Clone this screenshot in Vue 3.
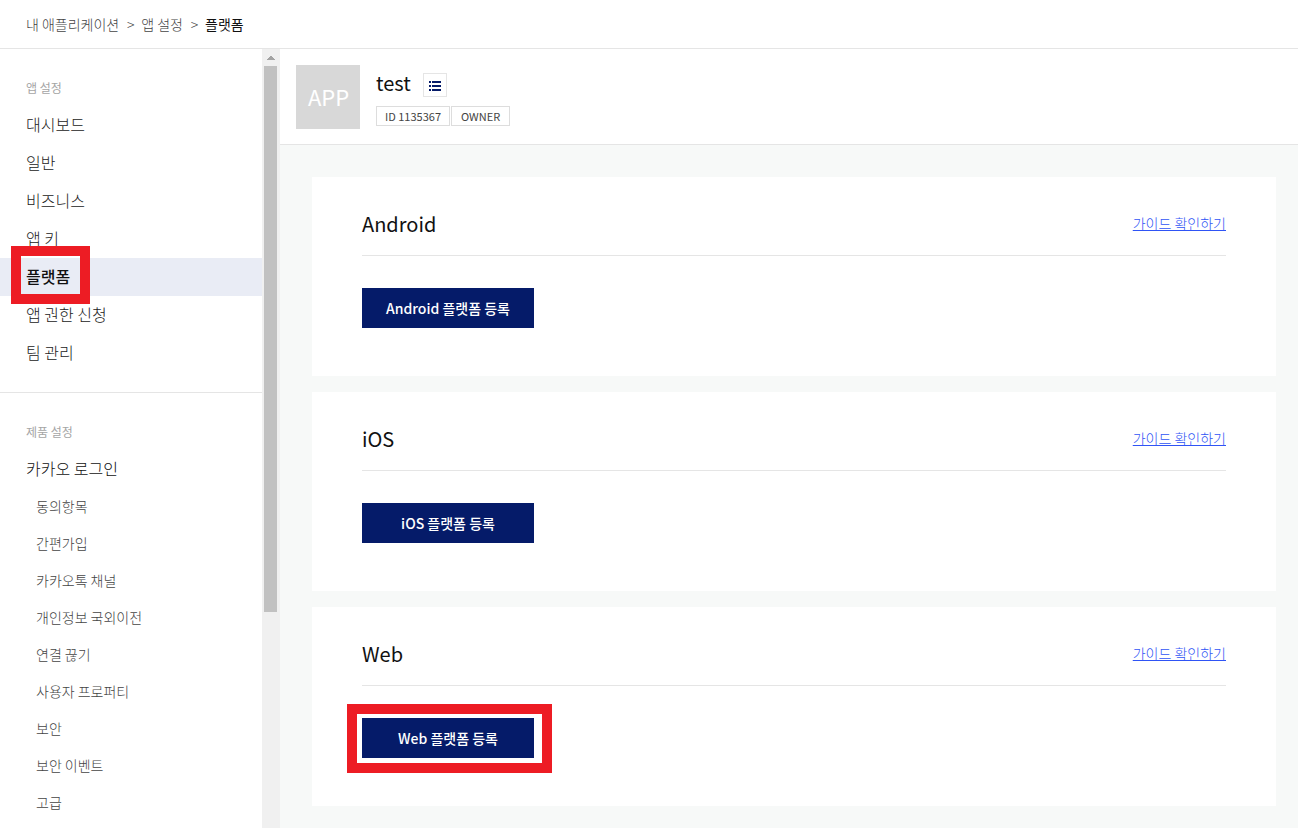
<script setup>
const appMenu = ['대시보드', '일반', '비즈니스', '앱 키', '플랫폼', '앱 권한 신청', '팀 관리']
const loginMenu = ['동의항목', '간편가입', '카카오톡 채널', '개인정보 국외이전', '연결 끊기', '사용자 프로퍼티', '보안', '보안 이벤트', '고급']
const platforms = ['Android', 'iOS', 'Web']
const current = '플랫폼'
const marked = 'Web'
</script>

<template>
  <div class="page">
    <nav class="breadcrumb" aria-label="breadcrumb">
      <a href="#">내 애플리케이션</a>
      <span class="sep">&gt;</span>
      <a href="#">앱 설정</a>
      <span class="sep">&gt;</span>
      <a href="#" class="here" aria-current="page">플랫폼</a>
    </nav>

    <div class="body">
      <aside class="sidebar">
        <nav class="menu">
          <section class="group">
            <h2>앱 설정</h2>
            <ul>
              <li v-for="item in appMenu" :key="item" :class="{ active: item === current }">
                <a href="#">{{ item }}</a>
                <span v-if="item === current" class="mark"></span>
              </li>
            </ul>
          </section>
          <section class="group">
            <h2>제품 설정</h2>
            <ul>
              <li class="parent"><a href="#">카카오 로그인</a></li>
              <li v-for="item in loginMenu" :key="item" class="sub"><a href="#">{{ item }}</a></li>
            </ul>
          </section>
        </nav>
        <div class="scrollbar" aria-hidden="true">
          <svg class="arrow" width="8" height="4" viewBox="0 0 8 4" shape-rendering="crispEdges">
            <path d="M3 0h2v1h1v1h1v1h1v1H0V3h1V2h1V1h1z" fill="#a3a3a3" />
          </svg>
          <div class="thumb"></div>
        </div>
      </aside>

      <main class="main">
        <header class="app-head">
          <div class="app-icon">APP</div>
          <div class="app-info">
            <div class="name-row">
              <h1>test</h1>
              <button type="button" class="list-btn" aria-label="앱 목록">
                <svg width="12" height="10" viewBox="0 0 12 10" shape-rendering="crispEdges" fill="#051b69">
                  <path d="M0 0h2v2H0zM3 0h9v2H3zM0 4h2v2H0zM3 4h9v2H3zM0 8h2v2H0zM3 8h9v2H3z" />
                </svg>
              </button>
            </div>
            <div class="tags">
              <span class="tag">ID 1135367</span>
              <span class="tag owner">OWNER</span>
            </div>
          </div>
        </header>

        <div class="cards">
          <section v-for="name in platforms" :key="name" class="card">
            <div class="card-head">
              <h2>{{ name }}</h2>
              <a href="#">가이드 확인하기</a>
            </div>
            <div class="action">
              <button type="button" class="register">{{ name }} 플랫폼 등록</button>
              <span v-if="name === marked" class="mark"></span>
            </div>
          </section>
        </div>
      </main>
    </div>
  </div>
</template>

<style>
body {
  margin: 0;
  overflow: hidden;
}
</style>

<style scoped>
.page,
.page * {
  box-sizing: border-box;
}
.page {
  display: flex;
  flex-direction: column;
  height: 100vh;
  background: #fff;
  color: #111;
  font-family: "Noto Sans CJK KR", "Noto Sans", sans-serif;
}
h1,
h2,
ul {
  margin: 0;
  padding: 0;
  font-weight: 400;
  list-style: none;
}
a {
  color: inherit;
  text-decoration: none;
}
button {
  font-family: inherit;
  cursor: pointer;
}
.breadcrumb {
  display: flex;
  flex: none;
  align-items: center;
  height: 49px;
  padding: 0 26px;
  border-bottom: 1px solid #e5e5e5;
  font-size: 14px;
  font-weight: 300;
  color: #444;
}
.sep {
  width: 22px;
  padding-left: 1px;
  text-align: center;
}
.here {
  color: #111;
  font-weight: 400;
}
.body {
  display: flex;
  flex: 1;
  min-height: 0;
}
.sidebar {
  display: flex;
  flex: none;
  width: 280px;
}
.menu {
  flex: 1;
  overflow: hidden;
}
.group {
  padding: 29px 0 20px;
}
.group + .group {
  border-top: 1px solid #e5e5e5;
}
.group h2 {
  padding-left: 26px;
  margin-bottom: 8px;
  font-size: 12px;
  line-height: 20px;
  color: #a5a5a5;
}
.group li {
  position: relative;
  height: 38px;
  font-size: 16px;
  line-height: 36px;
  color: #222;
  font-weight: 300;
}
.group li a {
  display: block;
  padding-left: 26px;
}
.group li.parent {
  color: #111;
}
.group li.active {
  background: #e9ecf5;
  color: #111;
  font-weight: 500;
}
.group li.sub {
  height: 37px;
  font-size: 14px;
  color: #444;
}
.group li.sub a {
  padding-left: 36px;
}
.mark {
  position: absolute;
  z-index: 1;
  border: 10px solid #ed1c24;
  pointer-events: none;
}
.active .mark {
  top: -12px;
  bottom: -8px;
  left: 11px;
  width: 79px;
}
.scrollbar {
  display: flex;
  flex-direction: column;
  flex: none;
  align-items: center;
  width: 18px;
  padding: 7px 1px 0 0;
  background: #f0f0f0;
}
.arrow {
  flex: none;
  margin-bottom: 6px;
}
.thumb {
  width: 13px;
  height: 75%;
  max-height: 546px;
  background: #c1c1c1;
}
.main {
  display: flex;
  flex: 1;
  flex-direction: column;
  min-width: 0;
  background: #f7f9f8;
}
.app-head {
  display: flex;
  gap: 16px;
  padding: 16px 16px 15px;
  border-bottom: 1px solid #e5e5e5;
  background: #fff;
}
.app-icon {
  width: 64px;
  height: 64px;
  padding-left: 1px;
  background: #d8d8d8;
  color: #fff;
  font-size: 22px;
  line-height: 62px;
  text-align: center;
}
.name-row {
  display: flex;
  gap: 12px;
  height: 41px;
}
.name-row h1 {
  font-size: 20px;
  line-height: 36px;
}
.list-btn {
  display: flex;
  align-items: center;
  justify-content: center;
  width: 24px;
  height: 24px;
  margin-top: 8px;
  padding: 2px 0 0;
  border: 1px solid #e5e5e5;
  background: #fff;
}
.tags {
  display: flex;
  gap: 1px;
}
.tag {
  height: 20px;
  padding: 0 8px;
  border: 1px solid #ddd;
  color: #444;
  font-size: 11px;
  line-height: 18px;
}
.tag.owner {
  padding: 0 9px;
}
.cards {
  display: flex;
  flex-direction: column;
  gap: 16px;
  padding: 32px 22px 22px 32px;
}
.card {
  padding: 0 50px 48px;
  background: #fff;
}
.card-head {
  display: flex;
  align-items: center;
  justify-content: space-between;
  height: 79px;
  padding-top: 16px;
  border-bottom: 1px solid #e5e5e5;
}
.card-head h2 {
  font-size: 20px;
  line-height: 32px;
}
.card-head a {
  padding-bottom: 2px;
  color: #2f54f5;
  font-size: 14px;
  font-weight: 300;
  line-height: 30px;
  text-decoration: underline;
}
.action {
  position: relative;
  width: 172px;
  margin-top: 32px;
}
.register {
  display: block;
  width: 100%;
  height: 40px;
  padding: 0;
  border: 0;
  background: #051b69;
  color: #fff;
  font-size: 14px;
  font-weight: 500;
  line-height: 40px;
}
.action .mark {
  inset: -14px -18px -15px -15px;
}
</style>
